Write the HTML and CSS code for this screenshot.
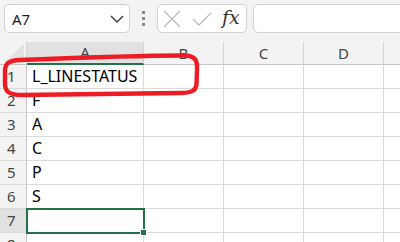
FILE: index.html
```html
<!DOCTYPE html>
<html lang="en">
<head>
    <meta charset="UTF-8">
    <meta name="viewport" content="width=device-width, initial-scale=1.0">
    <title>Sheet</title>
    <link rel="stylesheet" href="styles.css">
</head>
<body>

    <div class="toolbar">
        <div class="name-box">
            <span class="name-text">A7</span>
            <svg class="chevron" width="14" height="8" viewBox="0 0 14 8"><polyline points="1,1 7,7 13,1" fill="none" stroke="#333" stroke-width="1.3"/></svg>
        </div>
        <div class="dots">
            <span></span><span></span><span></span>
        </div>
        <div class="fx-box">
            <svg class="icon" width="18" height="18" viewBox="0 0 18 18"><path d="M1 1 L17 17 M17 1 L1 17" stroke="#bdbdbd" stroke-width="1.3" fill="none"/></svg>
            <svg class="icon" width="20" height="14" viewBox="0 0 20 14"><polyline points="1,7 7,13 19,1" stroke="#bdbdbd" stroke-width="1.3" fill="none"/></svg>
            <span class="fx">fx</span>
        </div>
        <div class="formula-input"></div>
    </div>

    <div class="grid">
        <!-- header row -->
        <div class="corner"><span class="corner-tri"></span></div>
        <div class="col-head active">A</div>
        <div class="col-head">B</div>
        <div class="col-head">C</div>
        <div class="col-head">D</div>
        <div class="col-head last"></div>

        <div class="row-head">1</div>
        <div class="cell">L_LINESTATUS</div>
        <div class="cell"></div><div class="cell"></div><div class="cell"></div><div class="cell last"></div>

        <div class="row-head">2</div>
        <div class="cell">F</div>
        <div class="cell"></div><div class="cell"></div><div class="cell"></div><div class="cell last"></div>

        <div class="row-head">3</div>
        <div class="cell">A</div>
        <div class="cell"></div><div class="cell"></div><div class="cell"></div><div class="cell last"></div>

        <div class="row-head">4</div>
        <div class="cell">C</div>
        <div class="cell"></div><div class="cell"></div><div class="cell"></div><div class="cell last"></div>

        <div class="row-head">5</div>
        <div class="cell">P</div>
        <div class="cell"></div><div class="cell"></div><div class="cell"></div><div class="cell last"></div>

        <div class="row-head">6</div>
        <div class="cell">S</div>
        <div class="cell"></div><div class="cell"></div><div class="cell"></div><div class="cell last"></div>

        <div class="row-head active">7</div>
        <div class="cell selected"><span class="handle"></span></div>
        <div class="cell"></div><div class="cell"></div><div class="cell"></div><div class="cell last"></div>

        <div class="row-head cut">8</div>
        <div class="cell cut"></div>
        <div class="cell cut"></div><div class="cell cut"></div><div class="cell cut"></div><div class="cell cut last"></div>
    </div>

    <!-- hand drawn red mark over row 1 -->
    <svg class="mark" width="400" height="242" viewBox="0 0 400 242">
        <path d="M20 60 C70 58 140 55.5 184 55.5 C196 55.5 197.5 61 197 70 L196.5 84 C196 91 191 93 180 93 L22 95 C10 95 5 92 5 84 L5 71 C5 63 9 60.5 20 60 Z" fill="none" stroke="#ed1c24" stroke-width="4.4" stroke-linejoin="round"/>
    </svg>

</body>
</html>
```

FILE: styles.css
```css
body {
    margin: 0;
    width: 400px;
    height: 242px;
    overflow: hidden;
    background-color: #f3f3f3;
    font-family: 'Noto Sans', 'Open Sans', sans-serif;
    position: relative;
}

.toolbar {
    display: flex;
    align-items: flex-start;
    height: 42px;
    box-sizing: border-box;
    padding-top: 4px;
    padding-left: 4px;
    white-space: nowrap;
    overflow: hidden;
}

.toolbar > * {
    flex-shrink: 0;
}

.name-box {
    width: 126px;
    height: 29px;
    box-sizing: border-box;
    background-color: white;
    border: 1px solid #d1d1d1;
    border-radius: 5px;
    display: flex;
    align-items: center;
    justify-content: space-between;
    padding: 0 5px 0 7px;
}

.name-text {
    font-size: 15px;
    color: #222;
}

.dots {
    width: 27px;
    height: 29px;
    display: flex;
    flex-direction: column;
    align-items: center;
    justify-content: center;
    gap: 3px;
}

.dots span {
    width: 3px;
    height: 3px;
    background-color: #8a8a8a;
}

.fx-box {
    width: 90px;
    height: 29px;
    box-sizing: border-box;
    background-color: white;
    border: 1px solid #d1d1d1;
    border-radius: 5px;
    display: flex;
    align-items: center;
    padding-left: 5px;
    gap: 11px;
}

.fx {
    font-family: 'DejaVu Serif', 'Liberation Serif', serif;
    font-style: italic;
    font-size: 19px;
    color: #333;
    margin-left: -1px;
    margin-top: -3px;
}

.formula-input {
    margin-left: 6px;
    width: 160px;
    height: 29px;
    box-sizing: border-box;
    background-color: white;
    border: 1px solid #d1d1d1;
    border-radius: 5px;
}

.grid {
    display: grid;
    grid-template-columns: 27px 117px 80px 80px 80px 16px;
    grid-template-rows: 23px repeat(7, 24px) 9px;
    background-color: white;
}

.corner {
    background-color: #f3f3f3;
    border-right: 1px solid #d4d4d4;
    border-bottom: 1px solid #c6c6c6;
    position: relative;
}

.corner-tri {
    position: absolute;
    right: 2px;
    bottom: 2px;
    width: 20px;
    height: 18px;
    background-color: #e2e2e2;
    clip-path: polygon(100% 0, 100% 100%, 0 100%);
}

.col-head {
    background-color: #f3f3f3;
    border-right: 1px solid #d4d4d4;
    border-bottom: 1px solid #c6c6c6;
    text-align: center;
    font-size: 15px;
    line-height: 22px;
    color: #444;
}

.col-head.active {
    background-color: #e1e1e1;
    border-bottom: 2px solid #217346;
    line-height: 21px;
}

.row-head {
    background-color: #f3f3f3;
    border-right: 1px solid #c6c6c6;
    border-bottom: 1px solid #dadada;
    font-size: 15px;
    line-height: 23px;
    padding-left: 7px;
    color: #444;
}

.row-head.active {
    background-color: #e1e1e1;
}

.cell {
    border-right: 1px solid #dadada;
    border-bottom: 1px solid #dadada;
    font-size: 16px;
    line-height: 23px;
    padding-left: 5px;
    color: #000;
    white-space: nowrap;
}

.last {
    border-right: none;
}

.cut {
    overflow: hidden;
    border-bottom: none;
}

.cell.selected {
    position: relative;
    outline: 2px solid #217346;
    outline-offset: -1px;
    z-index: 1;
}

.handle {
    position: absolute;
    right: -4px;
    bottom: -4px;
    width: 5px;
    height: 5px;
    background-color: #217346;
    border: 1px solid white;
}

.mark {
    position: absolute;
    left: 0;
    top: 0;
    pointer-events: none;
}
```
